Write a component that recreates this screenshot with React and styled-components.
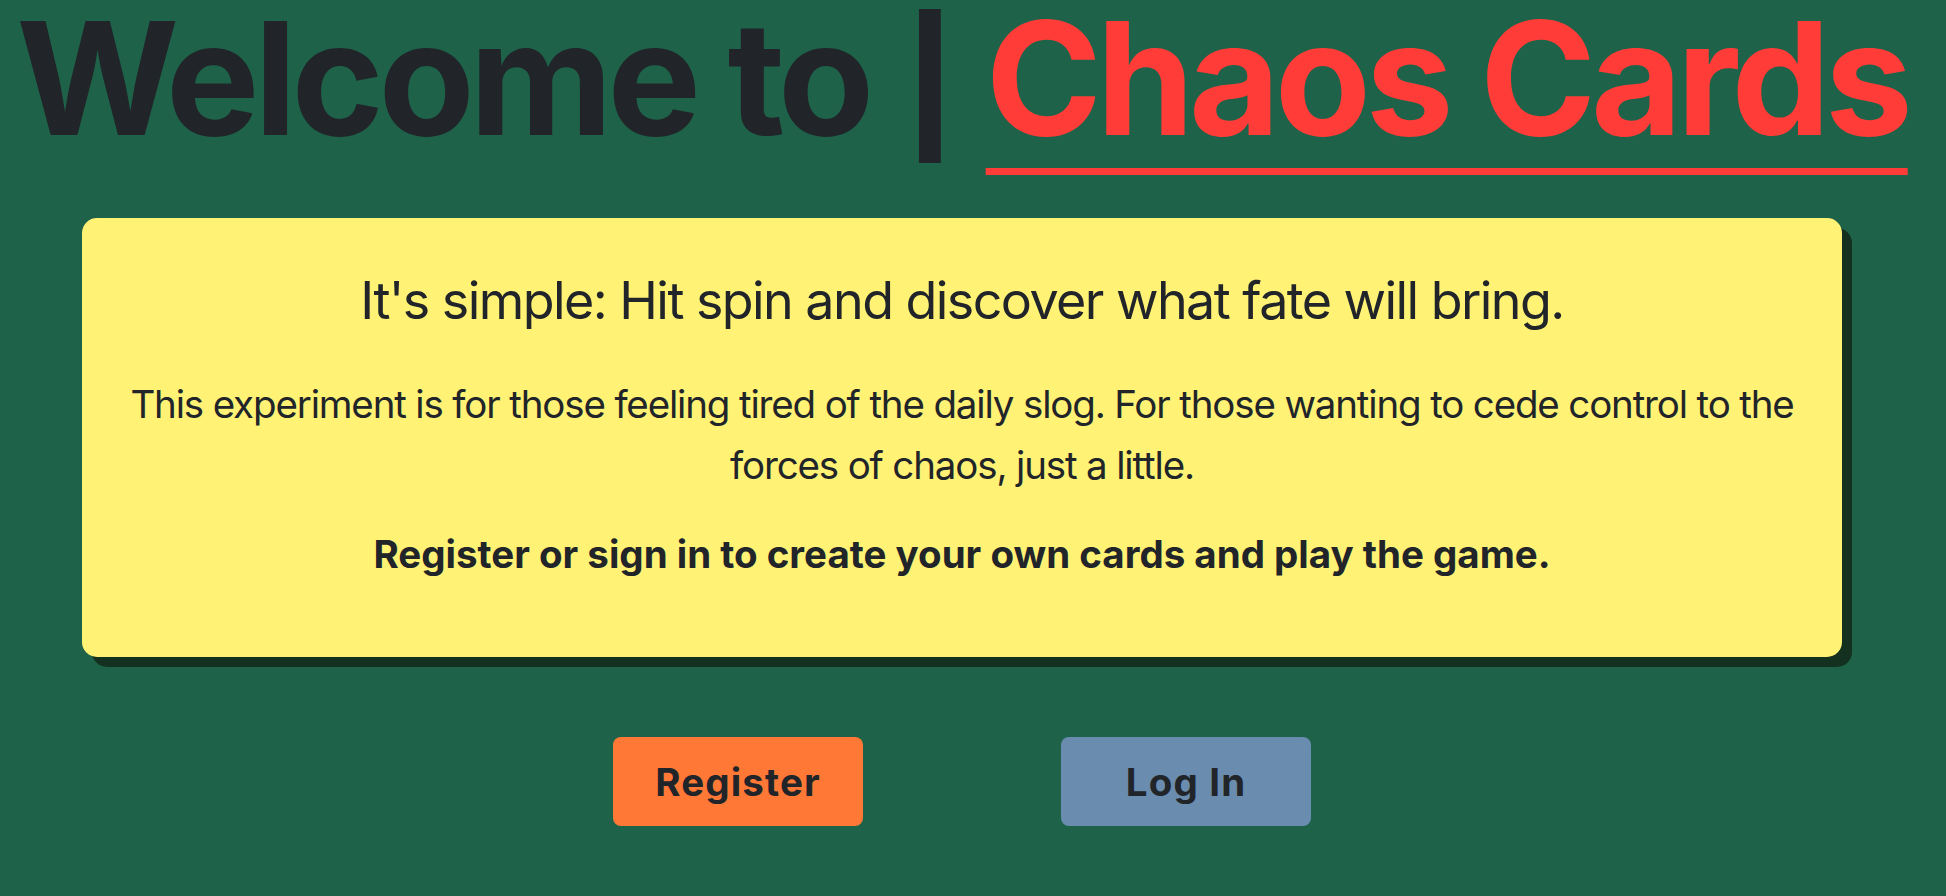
import React from 'react';
import styled, { createGlobalStyle } from 'styled-components';

const GlobalStyle = createGlobalStyle`
  html, body {
    margin: 0;
    padding: 0;
    background-color: #1e6349;
  }

  body {
    font-family: Inter, "Noto Sans", "Liberation Sans", sans-serif;
    color: #212529;
  }
`;

const App = () => {
  return (
    <Page>
      <GlobalStyle />
      <Title>
        Welcome to <Divider>|</Divider> <Brand>Chaos Cards</Brand>
      </Title>
      <InfoCard>
        <Lead>It's simple: Hit spin and discover what fate will bring.</Lead>
        <Body>
          This experiment is for those feeling tired of the daily slog. For those wanting to cede control to
          the forces of chaos, just a little.
        </Body>
        <Body bold>Register or sign in to create your own cards and play the game.</Body>
      </InfoCard>
      <ButtonRow>
        <ActionButton color="#ff7836">Register</ActionButton>
        <ActionButton color="#6a8caf">Log In</ActionButton>
      </ButtonRow>
    </Page>
  );
};

export default App;

// Styled Components

const Page = styled.div`
  width: 1924px;
  min-height: 896px;
  display: flex;
  flex-direction: column;
  align-items: center;
`;

const Title = styled.h1`
  margin: 0;
  font-size: 157px;
  font-weight: 700;
  line-height: 1;
  letter-spacing: -0.034em;
  white-space: nowrap;
  text-align: center;
`;

const Divider = styled.span`
  display: inline-block;
  transform: translateY(8px) scaleY(0.82);
`;

const Brand = styled.span`
  color: #ff3c38;
  text-decoration: underline;
  text-decoration-thickness: 7px;
  text-underline-offset: 33px;
`;

const InfoCard = styled.div`
  box-sizing: border-box;
  width: 1760px;
  margin-top: 61px;
  padding: 52px 30px 72px;
  background-color: #fff275;
  border-radius: 15px;
  box-shadow: 10px 10px 0 #14301f;
  text-align: center;
`;

const Lead = styled.h2`
  margin: 0 0 42px;
  font-size: 52px;
  font-weight: 400;
  line-height: 1.2;
  letter-spacing: -0.03em;
`;

const Body = styled.p`
  margin: 0 0 28px;
  font-size: 38.5px;
  font-weight: ${(props) => (props.bold ? 700 : 400)};
  line-height: 61px;
  letter-spacing: ${(props) => (props.bold ? '0' : '-0.03em')};

  &:last-child {
    margin-bottom: 0;
  }
`;

const ButtonRow = styled.div`
  display: flex;
  gap: 198px;
  margin-top: 80px;
`;

const ActionButton = styled.button`
  width: 250px;
  height: 89px;
  border: none;
  border-radius: 8px;
  background-color: ${(props) => props.color};
  color: #212529;
  font-family: Inter, "Noto Sans", "Liberation Sans", sans-serif;
  font-size: 38.5px;
  font-weight: 700;
  letter-spacing: 0.03em;
  cursor: pointer;
`;
